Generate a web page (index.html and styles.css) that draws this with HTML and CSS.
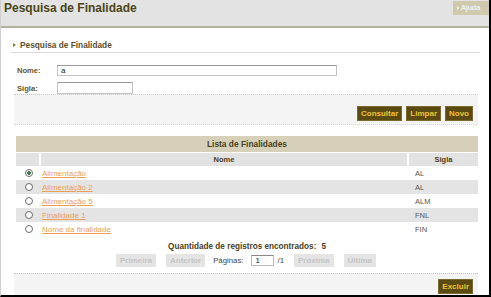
FILE: index.html
```html
<!DOCTYPE html>
<html lang="pt">
<head>
<meta charset="utf-8">
<title>Pesquisa de Finalidade</title>
<link rel="stylesheet" href="styles.css">
</head>
<body>
<div class="frame">
  <div class="header">
    <h1 class="title">Pesquisa de Finalidade</h1>
    <a class="help" href="#"><span class="help-arrow"></span>Ajuda</a>
  </div>

  <div class="section-head"><span class="tri"></span>Pesquisa de Finalidade</div>

  <div class="form">
    <div class="row"><label class="lbl">Nome:</label><div class="input wide">a</div></div>
    <div class="row"><label class="lbl">Sigla:</label><div class="input narrow"></div></div>
  </div>

  <div class="bar bar-top">
    <span class="btn">Consultar</span>
    <span class="btn">Limpar</span>
    <span class="btn">Novo</span>
  </div>

  <table class="list">
    <tr><th class="caption" colspan="3">Lista de Finalidades</th></tr>
    <tr class="cols"><th class="c-radio"></th><th class="c-name">Nome</th><th class="c-sigla">Sigla</th></tr>
    <tr><td class="c-radio"><span class="radio on"></span></td><td><a href="#">Alimentação</a></td><td class="sigla">AL</td></tr>
    <tr class="alt"><td class="c-radio"><span class="radio"></span></td><td><a href="#">Alimentação 2</a></td><td class="sigla">AL</td></tr>
    <tr><td class="c-radio"><span class="radio"></span></td><td><a href="#">Alimentação 5</a></td><td class="sigla">ALM</td></tr>
    <tr class="alt"><td class="c-radio"><span class="radio"></span></td><td><a href="#">Finalidade 1</a></td><td class="sigla">FNL</td></tr>
    <tr><td class="c-radio"><span class="radio"></span></td><td><a href="#">Nome da finalidade</a></td><td class="sigla">FIN</td></tr>
  </table>

  <div class="count">Quantidade de registros encontrados:<span class="num">5</span></div>
  <div class="pager">
    <span class="pbtn">Primeira</span>
    <span class="pbtn">Anterior</span>
    <span class="plabel">Páginas:</span>
    <span class="pinput">1</span>
    <span class="ptotal">/1</span>
    <span class="pbtn">Próxima</span>
    <span class="pbtn">Última</span>
  </div>

  <div class="bar bar-bottom">
    <span class="btn">Excluir</span>
  </div>
</div>
</body>
</html>
```

FILE: styles.css
```css
html, body {
  margin: 0;
  padding: 0;
  background: #ffffff;
}
body {
  width: 491px;
  height: 297px;
  overflow: hidden;
  font-family: "Liberation Sans", Arial, sans-serif;
}
.frame {
  box-sizing: border-box;
  width: 491px;
  height: 297px;
  border-left: 1px solid #cfcfcf;
  border-right: 2px solid #000;
  border-bottom: 2px solid #000;
  overflow: hidden;
}
.header {
  height: 26px;
  background: #e3e3e3;
  border-bottom: 2px solid #b3b29c;
  display: flex;
  justify-content: space-between;
  align-items: flex-start;
}
.title {
  margin: 0;
  padding: 1px 0 0 3px;
  font-size: 12px;
  line-height: 14px;
  font-weight: bold;
  color: #4b4318;
}
.help {
  margin: 1px 0 0 0;
  height: 14px;
  width: 36px;
  box-sizing: border-box;
  background: #cfcaae;
  color: #ffffff;
  font-size: 7.5px;
  line-height: 14px;
  text-decoration: none;
  display: flex;
  align-items: center;
  gap: 2px;
  padding-left: 4px;
}
.help-arrow {
  width: 0;
  height: 0;
  border-top: 2px solid transparent;
  border-bottom: 2px solid transparent;
  border-left: 2px solid #ffffff;
}
.section-head {
  margin: 12px 9px 0 10px;
  padding: 0 0 2px 2px;
  border-bottom: 1px solid #d8d8d8;
  font-size: 8.3px;
  line-height: 10px;
  font-weight: bold;
  color: #5a5030;
  display: flex;
  align-items: center;
  gap: 4px;
}
.tri {
  width: 0;
  height: 0;
  border-top: 2.5px solid transparent;
  border-bottom: 2.5px solid transparent;
  border-left: 3px solid #8b7a3a;
}
.form {
  margin: 12px 0 0 16px;
  display: flex;
  flex-direction: column;
  gap: 6px;
}
.row {
  display: flex;
  align-items: center;
}
.lbl {
  width: 40px;
  font-size: 7.6px;
  font-weight: bold;
  color: #665723;
}
.input {
  box-sizing: border-box;
  height: 11px;
  border: 1px solid #c4c4c4;
  border-top-color: #9a9a9a;
  background: #fff;
  font-size: 8px;
  line-height: 9px;
  padding-left: 3px;
  color: #222;
}
.wide { width: 280px; }
.narrow { width: 76px; height: 12px; }
.bar {
  margin: 0 11px 0 13px;
  background: #f4f4f4;
  border-top: 1px dotted #c8c8c8;
  display: flex;
  justify-content: flex-end;
  align-items: flex-end;
  gap: 4px;
  padding-right: 5px;
  box-sizing: border-box;
}
.bar-top {
  margin-top: 0;
  height: 31px;
  padding-bottom: 3px;
  border-bottom: 1px dotted #d8d8d8;
}
.bar-bottom {
  margin-top: 6px;
  height: 22px;
  padding-bottom: 1px;
}
.btn {
  height: 15px;
  box-sizing: border-box;
  padding: 0 3px;
  background: #5b4a12;
  border: 1px solid #7a6a30;
  color: #efc232;
  font-size: 8px;
  font-weight: bold;
  line-height: 13px;
}
.list {
  margin: 11px 0 0 15px;
  width: 462px;
  border-collapse: collapse;
  border-spacing: 0;
  font-size: 8px;
}
.caption {
  height: 16px;
  padding: 0;
  background: #d6d0b9;
  color: #4a4020;
  font-size: 8.4px;
  font-weight: bold;
  text-align: center;
}
.cols th {
  height: 13px;
  padding: 0;
  background: #e2e2e2;
  color: #4a4020;
  font-size: 7.5px;
  font-weight: bold;
  text-align: center;
  border-top: 1px solid #fff;
}
.cols .c-name, .cols .c-sigla {
  border-left: 2px solid #fff;
}
.c-radio { width: 23px; }
.c-sigla { width: 69px; }
.list td {
  height: 14px;
  padding: 0;
  vertical-align: middle;
}
.list td a {
  color: #eb9f54;
  text-decoration: underline;
  padding-left: 2px;
  font-size: 8px;
}
.list td.sigla {
  color: #555;
  font-size: 7.5px;
  padding-left: 7px;
}
.list tr.alt td {
  background: #e4e4e4;
}
.list td.c-radio {
  line-height: 0;
  text-align: center;
}
.radio {
  display: inline-block;
  box-sizing: border-box;
  width: 8px;
  height: 8px;
  border-radius: 50%;
  border: 1px solid #6c6c6c;
  background: #fff;
  margin-left: 2px;
}
.radio.on {
  background: radial-gradient(circle, #3b7a52 0 1.6px, #ffffff 2px);
}
.count {
  margin-top: 6px;
  text-align: center;
  font-size: 8.2px;
  font-weight: bold;
  color: #4a4020;
  padding-left: 4px;
}
.num {
  margin-left: 5px;
}
.pager {
  margin-top: 3px;
  display: flex;
  justify-content: center;
  align-items: center;
  gap: 0;
  padding-left: 2px;
  font-size: 7.8px;
  color: #444;
}
.pbtn {
  height: 13px;
  line-height: 13px;
  padding: 0 4px;
  background: #e4e4e4;
  color: #c4c4c4;
  font-size: 8px;
  font-weight: bold;
  margin: 0 5px;
}
.plabel {
  margin: 0 8px 0 3px;
}
.pinput {
  box-sizing: border-box;
  width: 23px;
  height: 11px;
  border: 1px solid #bbb;
  border-top-color: #888;
  line-height: 9px;
  padding-left: 3px;
  color: #111;
}
.ptotal {
  margin: 0 5px 0 3px;
}
```
